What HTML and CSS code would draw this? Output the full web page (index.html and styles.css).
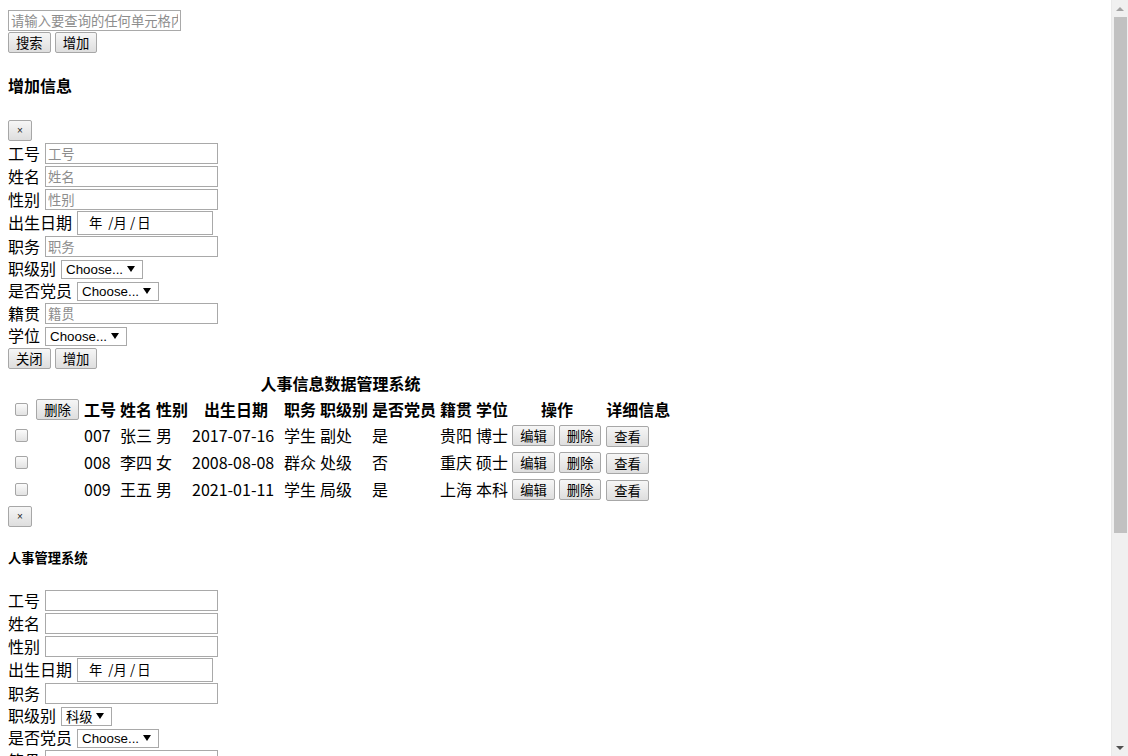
FILE: index.html
```html
<!DOCTYPE html>
<html lang="zh-CN">
<head>
<meta charset="utf-8">
<title>人事信息数据管理系统</title>
<link rel="stylesheet" href="styles.css">
</head>
<body>
<input class="text search" type="text" placeholder="请输入要查询的任何单元格内容">
<div class="btn-row">
  <button class="btn">搜索</button>
  <button class="btn">增加</button>
</div>

<h4 class="title">增加信息</h4>
<button class="close">×</button>
<div class="form">
  <div class="field"><span class="lbl">工号</span><input class="text" type="text" placeholder="工号"></div>
  <div class="field"><span class="lbl">姓名</span><input class="text" type="text" placeholder="姓名"></div>
  <div class="field"><span class="lbl">性别</span><input class="text" type="text" placeholder="性别"></div>
  <div class="field date-row"><span class="lbl">出生日期</span><span class="date"><span>年</span><span class="sep sep-1">/</span><span>月</span><span class="sep sep-2">/</span><span>日</span></span></div>
  <div class="field"><span class="lbl">职务</span><input class="text" type="text" placeholder="职务"></div>
  <div class="field sel-row"><span class="lbl">职级别</span><select class="sel"><option>Choose...</option></select></div>
  <div class="field sel-row"><span class="lbl">是否党员</span><select class="sel"><option>Choose...</option></select></div>
  <div class="field"><span class="lbl">籍贯</span><input class="text" type="text" placeholder="籍贯"></div>
  <div class="field sel-row"><span class="lbl">学位</span><select class="sel"><option>Choose...</option></select></div>
  <div class="field btns"><button class="btn">关闭</button><button class="btn">增加</button></div>
</div>

<table class="grid">
  <caption>人事信息数据管理系统</caption>
  <thead>
    <tr>
      <th class="c-chk"><input class="chk" type="checkbox"></th>
      <th class="c-del"><button class="btn">删除</button></th>
      <th class="c2">工号</th>
      <th class="c2">姓名</th>
      <th class="c2">性别</th>
      <th class="c-date">出生日期</th>
      <th class="c2">职务</th>
      <th class="c3">职级别</th>
      <th class="c4">是否党员</th>
      <th class="c2">籍贯</th>
      <th class="c2">学位</th>
      <th class="c-ops">操作</th>
      <th class="c4">详细信息</th>
    </tr>
  </thead>
  <tbody>
    <tr class="data">
      <td><input class="chk" type="checkbox"></td><td></td>
      <td>007</td><td>张三</td><td>男</td><td>2017-07-16</td><td>学生</td><td>副处</td><td>是</td><td>贵阳</td><td>博士</td>
      <td><div class="ops"><button class="btn">编辑</button><button class="btn">删除</button></div></td>
      <td><button class="btn">查看</button></td>
    </tr>
    <tr class="data">
      <td><input class="chk" type="checkbox"></td><td></td>
      <td>008</td><td>李四</td><td>女</td><td>2008-08-08</td><td>群众</td><td>处级</td><td>否</td><td>重庆</td><td>硕士</td>
      <td><div class="ops"><button class="btn">编辑</button><button class="btn">删除</button></div></td>
      <td><button class="btn">查看</button></td>
    </tr>
    <tr class="data">
      <td><input class="chk" type="checkbox"></td><td></td>
      <td>009</td><td>王五</td><td>男</td><td>2021-01-11</td><td>学生</td><td>局级</td><td>是</td><td>上海</td><td>本科</td>
      <td><div class="ops"><button class="btn">编辑</button><button class="btn">删除</button></div></td>
      <td><button class="btn">查看</button></td>
    </tr>
  </tbody>
</table>

<button class="close close-2">×</button>
<h5 class="sub">人事管理系统</h5>
<div class="form form-2">
  <div class="field"><span class="lbl">工号</span><input class="text" type="text"></div>
  <div class="field"><span class="lbl">姓名</span><input class="text" type="text"></div>
  <div class="field"><span class="lbl">性别</span><input class="text" type="text"></div>
  <div class="field date-row"><span class="lbl">出生日期</span><span class="date"><span>年</span><span class="sep sep-1">/</span><span>月</span><span class="sep sep-2">/</span><span>日</span></span></div>
  <div class="field"><span class="lbl">职务</span><input class="text" type="text"></div>
  <div class="field sel-row"><span class="lbl">职级别</span><select class="sel sel-short"><option>科级</option></select></div>
  <div class="field sel-row"><span class="lbl">是否党员</span><select class="sel"><option>Choose...</option></select></div>
  <div class="field"><span class="lbl">籍贯</span><input class="text" type="text"></div>
  <div class="field sel-row"><span class="lbl">学位</span><select class="sel"><option>Choose...</option></select></div>
  <div class="field btns"><button class="btn">关闭</button><button class="btn">修改</button></div>
</div>

<button class="close close-2">×</button>
<h5 class="sub">详细信息</h5>
<div class="form form-2">
  <div class="field"><span class="lbl">工号</span><span class="val">007</span></div>
  <div class="field"><span class="lbl">姓名</span><span class="val">张三</span></div>
  <div class="field"><span class="lbl">性别</span><span class="val">男</span></div>
  <div class="field"><span class="lbl">出生日期</span><span class="val">2017-07-16</span></div>
  <div class="field"><span class="lbl">职务</span><span class="val">学生</span></div>
  <div class="field"><span class="lbl">职级别</span><span class="val">副处</span></div>
  <div class="field"><span class="lbl">是否党员</span><span class="val">是</span></div>
  <div class="field"><span class="lbl">籍贯</span><span class="val">贵阳</span></div>
  <div class="field"><span class="lbl">学位</span><span class="val">博士</span></div>
</div>

<div class="scrollbar" aria-hidden="true">
  <span class="sb-arrow sb-up"></span>
  <span class="sb-thumb"></span>
  <span class="sb-fill"></span>
  <span class="sb-arrow sb-down"></span>
</div>
</body>
</html>
```
FILE: styles.css
```css
* {
  box-sizing: border-box;
}

body {
  margin: 8px;
  font-family: "Noto Sans CJK SC", "Noto Sans", sans-serif;
  font-size: 16px;
  line-height: 22px;
  color: #000;
  background: #fff;
}

.text {
  width: 173px;
  height: 21px;
  margin: 0;
  padding: 0 2px;
  border: 1px solid #a9a9a9;
  border-radius: 0;
  font-family: "Noto Sans CJK SC", sans-serif;
  font-size: 13.33px;
  line-height: 19px;
  color: #000;
  background: #fff;
  outline: none;
}

.text::placeholder {
  color: #8d8d8d;
}

.search {
  display: block;
  margin-top: 2px;
}

.btn-row {
  display: flex;
  gap: 4px;
  margin-top: 1px;
}

.btn {
  height: 21px;
  margin: 0;
  padding: 0 7px;
  border: 1px solid #a7a7a7;
  border-radius: 2px;
  background: linear-gradient(#f6f6f6, #dedede);
  font-family: "Noto Sans CJK SC", sans-serif;
  font-size: 13.33px;
  line-height: 19px;
  color: #000;
}

.title {
  margin: 21px 0 24px;
  font-size: 16px;
  line-height: 22px;
  font-weight: bold;
}

.close {
  display: block;
  width: 24px;
  height: 21px;
  margin: 0;
  padding: 0;
  border: 1px solid #a7a7a7;
  border-radius: 2px;
  background: linear-gradient(#f6f6f6, #dedede);
  font-family: "Liberation Sans", sans-serif;
  font-size: 10px;
  line-height: 19px;
  color: #222;
}

.form {
  margin-top: 1px;
}

.field {
  display: flex;
  align-items: center;
  gap: 5px;
  height: 23px;
}

.field.date-row {
  height: 24px;
}

.field.sel-row {
  height: 22px;
}

.field.btns {
  gap: 4px;
}

.lbl {
  white-space: nowrap;
  margin-bottom: 2px;
}

.date {
  display: flex;
  align-items: center;
  width: 136px;
  height: 24px;
  margin-top: -1px;
  padding-left: 11px;
  border: 1px solid #a9a9a9;
  font-size: 13.33px;
  line-height: 18px;
  background: #fff;
}

.date .sep-1 {
  margin: 0 0 0 6px;
}

.date .sep-2 {
  margin: 0 2px 0 3px;
}

.sel {
  appearance: none;
  -webkit-appearance: none;
  width: 82px;
  height: 19px;
  margin: 0;
  padding: 0 14px 0 4px;
  border: 1px solid #a9a9a9;
  border-radius: 0;
  font-family: "Liberation Sans", "Noto Sans CJK SC", sans-serif;
  font-size: 13.33px;
  line-height: 17px;
  color: #000;
  background: #fff url("data:image/svg+xml,%3Csvg xmlns='http://www.w3.org/2000/svg' width='8' height='6'%3E%3Cpath d='M0 0h8L4 6z' fill='%23000'/%3E%3C/svg%3E") no-repeat right 7px center;
}

.sel-short {
  width: 51px;
  font-family: "Noto Sans CJK SC", sans-serif;
}

.grid {
  border-spacing: 2px;
  margin: 0;
}

.grid caption {
  padding: 2px 0 1px;
  font-weight: bold;
  line-height: 22px;
}

.grid th,
.grid td {
  padding: 1px;
  white-space: nowrap;
  line-height: 21px;
}

.grid th {
  font-weight: bold;
  text-align: center;
}

.grid td {
  text-align: left;
}

.grid thead tr {
  height: 24px;
}

.grid .data td {
  height: 25px;
}

.c-chk { width: 22px; }
.c-del { width: 47px; }
.c2 { width: 34px; }
.c3 { width: 50px; }
.c4 { width: 66px; }
.c-date { width: 90px; }
.c-ops { width: 92px; }

.chk {
  appearance: none;
  -webkit-appearance: none;
  display: block;
  width: 13px;
  height: 13px;
  margin: 3px 3px 3px 4px;
  border: 1px solid #a6a6a6;
  border-radius: 2px;
  background: linear-gradient(#fbfbfb, #e2e2e2);
}

.ops {
  display: flex;
  gap: 4px;
}

.close-2 {
  margin-top: 2px;
}

.sub {
  margin: 22px 0;
  font-size: 13.28px;
  line-height: 18px;
  font-weight: bold;
}

.val {
  font-size: 16px;
}

/* decorative page scrollbar, drawn over the right edge */
.scrollbar {
  position: fixed;
  top: 0;
  right: 0;
  width: 17px;
  height: 100vh;
  display: flex;
  flex-direction: column;
  align-items: center;
  background: #f0f0f0;
  border-left: 1px solid #e9e9e9;
}

.sb-arrow {
  flex: 0 0 17px;
  width: 15px;
  display: flex;
  align-items: center;
  justify-content: center;
}

.sb-up::before {
  content: "";
  border-left: 4px solid transparent;
  border-right: 4px solid transparent;
  border-bottom: 4px solid #a3a3a3;
}

.sb-down::before {
  content: "";
  border-left: 4px solid transparent;
  border-right: 4px solid transparent;
  border-top: 4px solid #505050;
}

.sb-thumb {
  flex: 0 0 516px;
  width: 13px;
  background: #c1c1c1;
}

.sb-fill {
  flex: 1 1 auto;
}
```
